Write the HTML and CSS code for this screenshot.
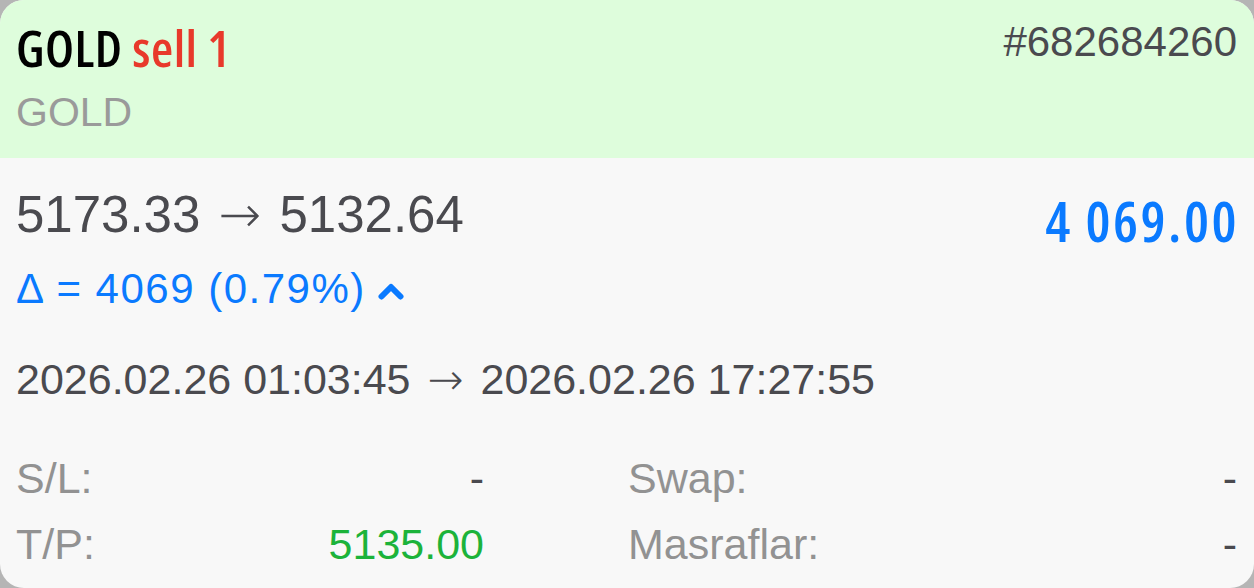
FILE: index.html
```html
<!DOCTYPE html>
<html lang="en">
	<head>
		<meta charset="UTF-8" />
		<meta name="viewport" content="width=device-width, initial-scale=1.0" />
		<title>Deal GOLD #682684260</title>
		<link rel="stylesheet" href="styles.css">
	</head>
	<body>
		<div class="deal-card">
			<div class="deal-head">
				<div class="head-row">
					<div class="deal-title">GOLD <span class="deal-type">sell 1</span></div>
					<div class="deal-id">#682684260</div>
				</div>
				<div class="deal-symbol">GOLD</div>
			</div>

			<div class="deal-body">
				<div class="price-row">
					<div class="prices">5173.33 <span class="arrow">→</span> 5132.64</div>
					<div class="profit">4 069.00</div>
				</div>
				<div class="delta">
					<span>Δ = 4069 (0.79%)</span>
					<svg class="chevron" width="26" height="17" viewBox="0 0 26 17">
						<path d="M3.5 13.5 L13 4 L22.5 13.5" fill="none" stroke="#0a7aff" stroke-width="6" stroke-linecap="round" stroke-linejoin="round" />
					</svg>
				</div>
				<div class="times">2026.02.26 01:03:45 <span class="arrow">→</span> 2026.02.26 17:27:55</div>

				<div class="details">
					<div class="detail left-col">
						<span class="label">S/L:</span>
						<span class="value">-</span>
					</div>
					<div class="detail">
						<span class="label">Swap:</span>
						<span class="value">-</span>
					</div>
					<div class="detail left-col">
						<span class="label">T/P:</span>
						<span class="value tp">5135.00</span>
					</div>
					<div class="detail">
						<span class="label">Masraflar:</span>
						<span class="value">-</span>
					</div>
				</div>
			</div>
		</div>
	</body>
</html>
```

FILE: styles.css
```css
html,
body {
	margin: 0;
	height: 100%;
}
body {
	font-family: "Liberation Sans", Arial, sans-serif;
	background-color: #b5b5b5;
	color: #4a4a4f;
}
.deal-card {
	height: 588px;
	border-radius: 24px;
	overflow: hidden;
	background-color: #f8f8f8;
}
.deal-head {
	background-color: #defddc;
	padding: 17px 17px 20px 16px;
	height: 121px;
}
.head-row {
	display: flex;
	justify-content: space-between;
	align-items: flex-start;
}
.deal-title {
	font-family: "Open Sans", sans-serif;
	font-stretch: 75%;
	font-weight: 650;
	font-size: 51px;
	letter-spacing: 0.5px;
	line-height: 60px;
	color: #000;
}
.deal-type {
	color: #e8392b;
}
.deal-id {
	font-size: 42px;
	line-height: 50px;
}
.deal-symbol {
	font-size: 41px;
	line-height: 48px;
	margin-top: 11px;
	color: #9a9a9a;
}
.deal-body {
	padding: 27px 17px 0 16px;
}
.price-row {
	display: flex;
	justify-content: space-between;
	align-items: flex-start;
}
.prices {
	font-size: 51px;
	line-height: 60px;
}
.arrow {
	font-family: "DejaVu Sans", sans-serif;
	font-weight: 200;
	margin: 0 4px;
}
.profit {
	font-family: "Open Sans", sans-serif;
	font-stretch: 75%;
	font-weight: 650;
	font-size: 56px;
	letter-spacing: 2.5px;
	line-height: 60px;
	margin-top: 5px;
	margin-right: -2px;
	color: #0a7aff;
}
.delta {
	font-size: 42px;
	letter-spacing: 1.5px;
	line-height: 48px;
	margin-top: 15px;
	color: #0a7aff;
	display: flex;
	align-items: center;
	gap: 12px;
}
.chevron {
	margin-top: 4px;
}
.times {
	font-size: 43px;
	line-height: 50px;
	margin-top: 41px;
}
.times .arrow {
	margin: 0 5px;
}
.details {
	display: grid;
	grid-template-columns: 468px 1fr;
	column-gap: 144px;
	margin-top: 41px;
}
.detail {
	display: flex;
	justify-content: space-between;
	font-size: 43px;
	line-height: 66px;
}
.label {
	color: #929292;
}
.tp {
	color: #1cb33a;
}
```
